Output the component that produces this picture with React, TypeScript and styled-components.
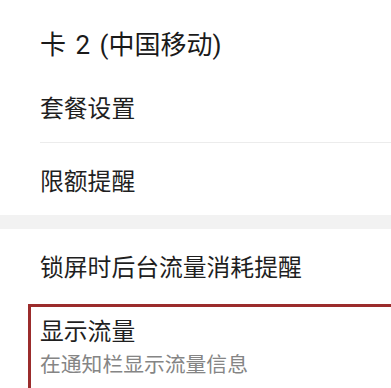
import React from "react";
import styled, { createGlobalStyle } from "styled-components";

const Global = createGlobalStyle`
  html, body { margin: 0; padding: 0; background: #ffffff; overflow: hidden; }
  body { font-family: Roboto, "Noto Sans CJK SC", "Noto Sans", sans-serif; color: #1c1c1c; }
`;

const Page = styled.div`
  display: flex;
  flex-direction: column;
  width: 391px;
  height: 388px;
  overflow: hidden;
  & > * { flex-shrink: 0; }
`;

const Section = styled.section`
  display: flex;
  flex-direction: column;
  background: #ffffff;
  & > * { flex-shrink: 0; }
`;

const SectionTitle = styled.h2`
  margin: 0;
  height: 71px;
  padding: 29px 0 0 40px;
  box-sizing: border-box;
  font-size: 26px;
  line-height: 32px;
  font-weight: 400;
  word-spacing: 3px;
  color: #1a1a1a;
`;

const Row = styled.div<{ $divider?: boolean }>`
  display: flex;
  align-items: center;
  height: 72px;
  margin-left: 40px;
  box-sizing: border-box;
  font-size: 23.8px;
  color: #1f1f1f;
  border-bottom: ${(p) => (p.$divider ? "1px solid #ececec" : "none")};
`;

const Band = styled.div`
  height: 14px;
  background: #f2f2f2;
`;

const Highlight = styled.div`
  display: flex;
  flex-direction: column;
  gap: 5px;
  margin: 3px -12px 0 28px;
  padding: 10px 0 0 9px;
  border: 3px solid #9b2c2c;
  height: 120px;
`;

const ItemTitle = styled.div`
  font-size: 23.8px;
  line-height: 30px;
  color: #1f1f1f;
`;

const ItemSub = styled.div`
  font-size: 20.8px;
  line-height: 26px;
  color: #858585;
`;

export default function App() {
  return (
    <Page>
      <Global />
      <Section>
        <SectionTitle>卡 2 (中国移动)</SectionTitle>
        <Row $divider>套餐设置</Row>
        <Row>限额提醒</Row>
      </Section>
      <Band />
      <Section>
        <Row>锁屏时后台流量消耗提醒</Row>
        <Highlight>
          <ItemTitle>显示流量</ItemTitle>
          <ItemSub>在通知栏显示流量信息</ItemSub>
        </Highlight>
      </Section>
    </Page>
  );
}
